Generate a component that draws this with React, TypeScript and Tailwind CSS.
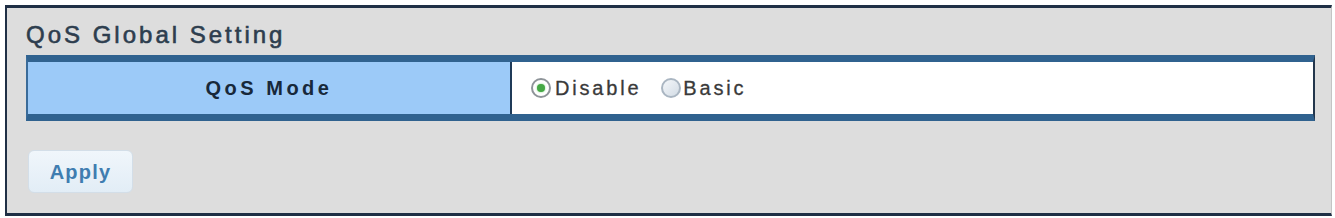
import { useState } from 'react';

type Mode = 'disable' | 'basic';

const Radio = ({ checked }: { checked: boolean }) =>
  checked ? (
    <span className="flex h-[20px] w-[20px] shrink-0 items-center justify-center rounded-full border-2 border-[#8e9499] bg-white">
      <span className="h-[8px] w-[8px] rounded-full bg-[#45a845] shadow-[0_0_2px_#7fd07f]" />
    </span>
  ) : (
    <span className="h-[20px] w-[20px] shrink-0 rounded-full border-2 border-[#aab6c2] bg-gradient-to-br from-[#f4f7fa] to-[#d3dce5]" />
  );

const App = () => {
  const [mode, setMode] = useState<Mode>('disable');

  return (
    <div className="h-[218px] w-[1335px] bg-white pt-[5px] pl-[5px] font-['Liberation_Sans',Arial,sans-serif]">
      <div className="flex h-[211px] w-[1327px] flex-col border-y-[3px] border-l-[2px] border-r border-y-[#1f2f45] border-l-[#1f2f45] border-r-[#c4c4c4] bg-[#dddddd] pt-[12px] pl-[19px] pr-[16px]">
        <h1 className="h-[30px] text-[24px] leading-[30px] font-normal tracking-[3px] text-[#2d3d4e] [-webkit-text-stroke:0.6px_#2d3d4e]">
          QoS Global Setting
        </h1>

        <div className="mt-[5px] flex h-[66px] border-y-[7px] border-x-2 border-y-[#30628f] border-l-[#3a6b99] border-r-[#23364c]">
          <div className="flex w-[484px] items-center justify-center border-r-2 border-[#1f3a58] bg-[#9ccaf8] text-[20px] font-bold tracking-[3.5px] text-[#17283a]">
            QoS Mode
          </div>
          <div className="flex flex-1 items-center bg-white pl-[19px] text-[20px] tracking-[2.8px] text-[#3a3a3a] [-webkit-text-stroke:0.3px_#3a3a3a]">
            <label className="flex cursor-pointer items-center gap-[4px]" onClick={() => setMode('disable')}>
              <Radio checked={mode === 'disable'} />
              <span>Disable</span>
            </label>
            <label className="ml-[20px] flex cursor-pointer items-center gap-[2px]" onClick={() => setMode('basic')}>
              <Radio checked={mode === 'basic'} />
              <span>Basic</span>
            </label>
          </div>
        </div>

        <button className="mt-[29px] ml-[2px] h-[43px] w-[105px] rounded-[6px] border border-[#d3dee8] bg-gradient-to-b from-[#f0f6fb] to-[#e2edf6] text-[20px] font-bold tracking-[1.2px] text-[#3f7db0]">
          Apply
        </button>
      </div>
    </div>
  );
};

export default App;
